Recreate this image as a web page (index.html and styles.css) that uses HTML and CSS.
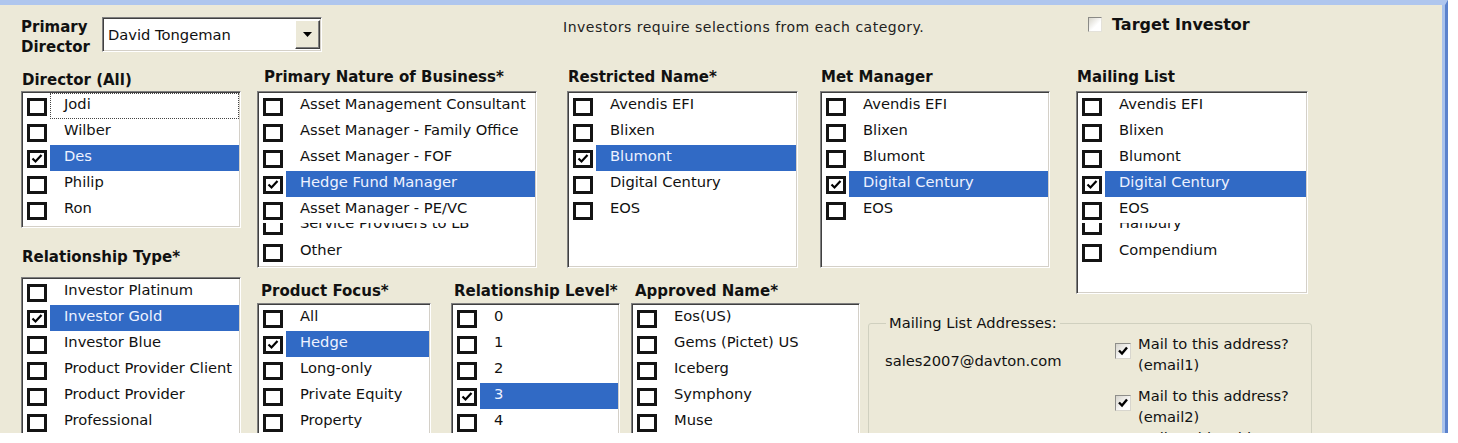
FILE: index.html
```html
<!DOCTYPE html>
<html lang="en">

<head>
    <meta charset="UTF-8">
    <meta name="viewport" content="width=device-width, initial-scale=1.0">
    <title>Investor Details</title>
    <link rel="stylesheet" href="styles.css">
</head>

<body>
    <div class="window">
        <!-- top line: director picker, hint, target flag -->
        <div class="header">
            <div class="caption director-label">Primary<br>Director</div>
            <div class="combo">
                <span>David Tongeman</span>
                <span class="combo-btn">
                    <svg width="9" height="5" viewBox="0 0 9 5"><path d="M0 0h9L4.5 5z" fill="#000"/></svg>
                </span>
            </div>
            <div class="note">Investors require selections from each category.</div>
            <label class="target"><span class="flat-box"></span>Target Investor</label>
        </div>

        <div class="main">
            <div class="col-left">
                <div class="group g-director">
                    <div class="caption">Director (All)</div>
                    <div class="listbox">
                        <div class="item focus"><span class="check"></span><span class="item-text">Jodi</span></div>
                        <div class="item"><span class="check"></span><span class="item-text">Wilber</span></div>
                        <div class="item selected"><span class="check on"><svg viewBox="0 0 14 12"><path d="M2.5 5.5l3 3 6-6.5"/></svg></span><span class="item-text">Des</span></div>
                        <div class="item"><span class="check"></span><span class="item-text">Philip</span></div>
                        <div class="item"><span class="check"></span><span class="item-text">Ron</span></div>
                    </div>
                </div>
                <div class="group g-reltype">
                    <div class="caption">Relationship Type*</div>
                    <div class="listbox">
                        <div class="item"><span class="check"></span><span class="item-text">Investor Platinum</span></div>
                        <div class="item selected"><span class="check on"><svg viewBox="0 0 14 12"><path d="M2.5 5.5l3 3 6-6.5"/></svg></span><span class="item-text">Investor Gold</span></div>
                        <div class="item"><span class="check"></span><span class="item-text">Investor Blue</span></div>
                        <div class="item"><span class="check"></span><span class="item-text">Product Provider Client</span></div>
                        <div class="item"><span class="check"></span><span class="item-text">Product Provider</span></div>
                        <div class="item"><span class="check"></span><span class="item-text">Professional</span></div>
                    </div>
                </div>
            </div>

            <div class="col-right">
                <div class="row-top">
                    <div class="group g-nature">
                        <div class="caption">Primary Nature of Business*</div>
                        <div class="listbox">
                            <div class="item"><span class="check"></span><span class="item-text">Asset Management Consultant</span></div>
                            <div class="item"><span class="check"></span><span class="item-text">Asset Manager - Family Office</span></div>
                            <div class="item"><span class="check"></span><span class="item-text">Asset Manager - FOF</span></div>
                            <div class="item selected"><span class="check on"><svg viewBox="0 0 14 12"><path d="M2.5 5.5l3 3 6-6.5"/></svg></span><span class="item-text">Hedge Fund Manager</span></div>
                            <div class="item"><span class="check"></span><span class="item-text">Asset Manager - PE/VC</span></div>
                            <div class="item-cut"><div class="item"><span class="check"></span><span class="item-text">Service Providers to LB</span></div></div>
                            <div class="item"><span class="check"></span><span class="item-text">Other</span></div>
                        </div>
                    </div>
                    <div class="group g-restricted">
                        <div class="caption">Restricted Name*</div>
                        <div class="listbox">
                            <div class="item"><span class="check"></span><span class="item-text">Avendis EFI</span></div>
                            <div class="item"><span class="check"></span><span class="item-text">Blixen</span></div>
                            <div class="item selected"><span class="check on"><svg viewBox="0 0 14 12"><path d="M2.5 5.5l3 3 6-6.5"/></svg></span><span class="item-text">Blumont</span></div>
                            <div class="item"><span class="check"></span><span class="item-text">Digital Century</span></div>
                            <div class="item"><span class="check"></span><span class="item-text">EOS</span></div>
                        </div>
                    </div>
                    <div class="group g-met">
                        <div class="caption">Met Manager</div>
                        <div class="listbox">
                            <div class="item"><span class="check"></span><span class="item-text">Avendis EFI</span></div>
                            <div class="item"><span class="check"></span><span class="item-text">Blixen</span></div>
                            <div class="item"><span class="check"></span><span class="item-text">Blumont</span></div>
                            <div class="item selected"><span class="check on"><svg viewBox="0 0 14 12"><path d="M2.5 5.5l3 3 6-6.5"/></svg></span><span class="item-text">Digital Century</span></div>
                            <div class="item"><span class="check"></span><span class="item-text">EOS</span></div>
                        </div>
                    </div>
                    <div class="group g-mailing">
                        <div class="caption">Mailing List</div>
                        <div class="listbox">
                            <div class="item"><span class="check"></span><span class="item-text">Avendis EFI</span></div>
                            <div class="item"><span class="check"></span><span class="item-text">Blixen</span></div>
                            <div class="item"><span class="check"></span><span class="item-text">Blumont</span></div>
                            <div class="item selected"><span class="check on"><svg viewBox="0 0 14 12"><path d="M2.5 5.5l3 3 6-6.5"/></svg></span><span class="item-text">Digital Century</span></div>
                            <div class="item"><span class="check"></span><span class="item-text">EOS</span></div>
                            <div class="item-cut"><div class="item"><span class="check"></span><span class="item-text">Hanbury</span></div></div>
                            <div class="item"><span class="check"></span><span class="item-text">Compendium</span></div>
                        </div>
                    </div>
                </div>

                <div class="row-bottom">
                    <div class="group g-focus">
                        <div class="caption">Product Focus*</div>
                        <div class="listbox">
                            <div class="item"><span class="check"></span><span class="item-text">All</span></div>
                            <div class="item selected"><span class="check on"><svg viewBox="0 0 14 12"><path d="M2.5 5.5l3 3 6-6.5"/></svg></span><span class="item-text">Hedge</span></div>
                            <div class="item"><span class="check"></span><span class="item-text">Long-only</span></div>
                            <div class="item"><span class="check"></span><span class="item-text">Private Equity</span></div>
                            <div class="item"><span class="check"></span><span class="item-text">Property</span></div>
                        </div>
                    </div>
                    <div class="group g-level">
                        <div class="caption">Relationship Level*</div>
                        <div class="listbox">
                            <div class="item"><span class="check"></span><span class="item-text">0</span></div>
                            <div class="item"><span class="check"></span><span class="item-text">1</span></div>
                            <div class="item"><span class="check"></span><span class="item-text">2</span></div>
                            <div class="item selected"><span class="check on"><svg viewBox="0 0 14 12"><path d="M2.5 5.5l3 3 6-6.5"/></svg></span><span class="item-text">3</span></div>
                            <div class="item"><span class="check"></span><span class="item-text">4</span></div>
                        </div>
                    </div>
                    <div class="group g-approved">
                        <div class="caption">Approved Name*</div>
                        <div class="listbox">
                            <div class="item"><span class="check"></span><span class="item-text">Eos(US)</span></div>
                            <div class="item"><span class="check"></span><span class="item-text">Gems (Pictet) US</span></div>
                            <div class="item"><span class="check"></span><span class="item-text">Iceberg</span></div>
                            <div class="item"><span class="check"></span><span class="item-text">Symphony</span></div>
                            <div class="item"><span class="check"></span><span class="item-text">Muse</span></div>
                        </div>
                    </div>

                    <fieldset class="addresses">
                        <legend>Mailing List Addresses:</legend>
                        <div class="addr">
                            <div class="addr-email">sales2007@davton.com</div>
                            <div class="addr-opts">
                                <label class="opt"><span class="opt-box"><svg viewBox="0 0 14 14"><path d="M3 6.5l3 3 5-6"/></svg></span><span class="opt-text">Mail to this address?<br>(email1)</span></label>
                                <label class="opt tight"><span class="opt-box"><svg viewBox="0 0 14 14"><path d="M3 6.5l3 3 5-6"/></svg></span><span class="opt-text">Mail to this address?<br>(email2)</span></label>
                                <label class="opt"><span class="opt-box"></span><span class="opt-text">Mail to this address?<br>(email3)</span></label>
                            </div>
                        </div>
                    </fieldset>
                </div>
            </div>
        </div>
    </div>
</body>

</html>
```

FILE: styles.css
```css
* {
    box-sizing: border-box;
}

body {
    margin: 0;
    background-color: #fff;
    font-family: "DejaVu Sans", sans-serif;
    font-size: 14.7px;
    color: #111;
}

/* the dialog client area, with the blue frame on top and right */
.window {
    width: 1448px;
    height: 433px;
    overflow: hidden;
    background-color: #ece9d8;
    border-top: 5px solid #afc6ee;
    border-right: 3px solid #5b82cc;
    box-shadow: inset -3px 0 0 #a9c2ec;
    padding: 12px 0 0 21px;
}

.caption {
    font-weight: bold;
    font-size: 15px;
    line-height: 20px;
    white-space: nowrap;
    color: #111;
}

/* header */
.header {
    display: flex;
    align-items: flex-start;
    height: 35px;
}

.director-label {
    width: 81px;
}

.combo {
    display: flex;
    align-items: center;
    width: 220px;
    height: 35px;
    padding-left: 5px;
    background-color: #fff;
    border: 1px solid;
    border-color: #808080 #fff #fff #808080;
    box-shadow: inset 1px 1px #404040, inset -1px -1px #d4d0c8;
}

.combo-btn {
    display: flex;
    align-items: center;
    justify-content: center;
    width: 25px;
    height: 29px;
    margin-left: auto;
    margin-right: 1px;
    background-color: #ece9d8;
    border: 1px solid;
    border-color: #fff #404040 #404040 #fff;
    box-shadow: inset -1px -1px #808080;
}

.note {
    width: 525px;
    margin-left: 241px;
    font-size: 14px;
    line-height: 20px;
    letter-spacing: 0.5px;
    color: #222;
}

.target {
    display: flex;
    align-items: center;
    margin-top: -2px;
    font-weight: bold;
    font-size: 16px;
    line-height: 20px;
}

.flat-box {
    width: 14px;
    height: 15px;
    margin: -2px 10px 0 0;
    background: linear-gradient(135deg, #d8d6cc, #fff 60%);
    border: 1px solid;
    border-color: #8a8a86 #e4e2da #e4e2da #8a8a86;
}

/* body: left column + right block */
.main {
    display: flex;
    margin-top: 15px;
}

.col-left {
    width: 220px;
}

.col-right {
    margin-left: 16px;
}

.g-director .caption {
    margin-top: 3px;
    padding-left: 1px;
}

.g-director .listbox {
    margin-top: 1px;
    height: 137px;
}

.g-reltype .caption {
    margin-top: 19px;
    padding-left: 1px;
}

.g-reltype .listbox {
    margin-top: 10px;
    height: 170px;
}

.row-top {
    display: flex;
    height: 214px;
}

.row-top .listbox {
    margin-top: 4px;
    height: 177px;
}

.row-top .caption {
    padding-left: 1px;
}

.g-nature {
    width: 280px;
    margin-right: 30px;
}

.g-nature .caption {
    padding-left: 7px;
}

.g-restricted {
    width: 231px;
    margin-right: 22px;
}

.g-met {
    width: 230px;
    margin-right: 26px;
}

.g-mailing {
    width: 232px;
}

.row-top .g-mailing .listbox {
    height: 203px;
}

.row-bottom {
    display: flex;
}

.row-bottom .listbox {
    margin-top: 2px;
    height: 140px;
}

.g-focus {
    width: 174px;
    margin-right: 20px;
}

.g-focus .caption {
    padding-left: 4px;
}

.g-level {
    width: 169px;
    margin-right: 11px;
}

.g-level .caption {
    padding-left: 3px;
}

.g-approved {
    width: 229px;
}

.g-approved .caption {
    padding-left: 4px;
}

/* checked list box */
.listbox {
    background-color: #fff;
    border: 1px solid;
    border-color: #808080 #fff #fff #808080;
    box-shadow: inset 1px 1px #404040, inset -1px -1px #d4d0c8;
    padding: 1px;
    overflow: hidden;
}

.item {
    display: flex;
    height: 26px;
}

.check {
    flex: none;
    width: 20px;
    height: 18px;
    margin: 5px 3px 0 4px;
    background-color: #fff;
    border: 3px solid #141414;
}

.check svg {
    display: block;
    width: 14px;
    height: 12px;
    fill: none;
    stroke: #000;
    stroke-width: 2.2;
}

.item-text {
    flex: 1;
    padding-left: 14px;
    line-height: 22px;
    white-space: nowrap;
}

.item.selected .item-text {
    background-color: #316ac5;
    color: #eef2ff;
}

.item.focus .item-text {
    outline: 1px dotted #444;
    outline-offset: -1px;
}

/* row half scrolled out of view */
.item-cut {
    height: 16px;
    overflow: hidden;
}

.item-cut .item {
    margin-top: -11px;
}

/* group box */
.addresses {
    width: 444px;
    min-height: 150px;
    margin: 32px 0 0 8px;
    padding: 0 0 0 16px;
    border: 1px solid #d0d0bf;
    border-radius: 3px;
}

.addresses legend {
    margin-left: 1px;
    padding: 0 3px;
    line-height: 20px;
}

.addr {
    display: flex;
}

.addr-email {
    width: 230px;
    margin-top: 17px;
    line-height: 21px;
}

.opt {
    display: flex;
    align-items: flex-start;
    margin-bottom: 10px;
}

.opt.tight {
    margin-bottom: 0;
}

.opt-box {
    flex: none;
    width: 16px;
    height: 16px;
    margin: 10px 7px 0 0;
    background: linear-gradient(135deg, #d6d4cc, #fff 70%);
    border: 1px solid;
    border-color: #8e8e8a #d8d6ce #d8d6ce #8e8e8a;
}

.opt-box svg {
    display: block;
    width: 14px;
    height: 14px;
    fill: none;
    stroke: #000;
    stroke-width: 2.4;
}

.opt-text {
    line-height: 21px;
}
```
